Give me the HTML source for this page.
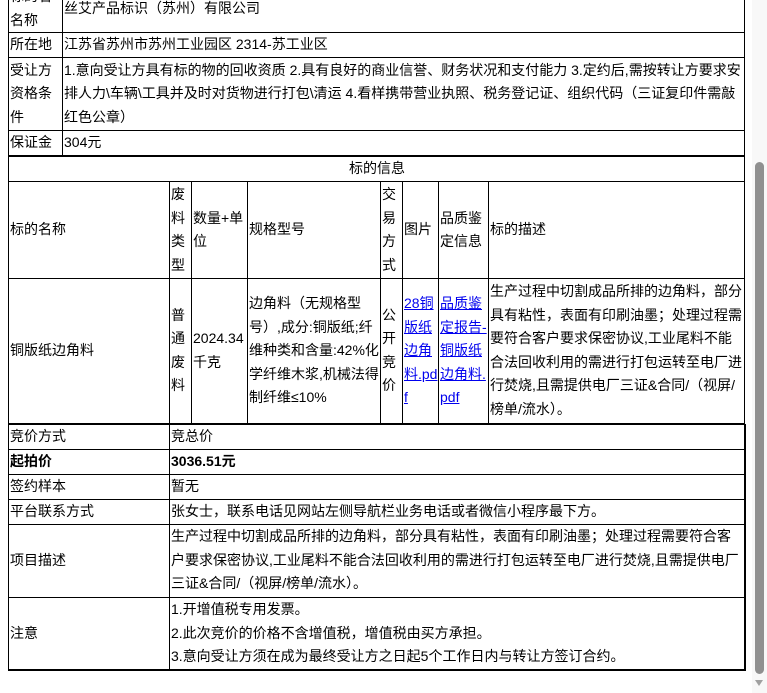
<!DOCTYPE html>
<html><head><meta charset="utf-8"><style>
html,body{margin:0;padding:0;background:#fff;width:767px;height:693px;overflow:hidden;position:relative}
body{font-family:"Liberation Sans","Noto Sans CJK SC",sans-serif;font-size:14px;color:#000}
table{border-collapse:collapse;table-layout:fixed;position:absolute}
td{border:1px solid #000;padding:0 0 0 1px;vertical-align:middle;line-height:23.5px;word-break:break-all}
a{color:#00e;text-decoration:underline}
.sb{position:absolute;left:752px;top:0;width:15px;height:693px;background:#f8f8f8}
.th{position:absolute;left:755px;top:162px;width:9px;height:512px;background:#909090;border-radius:5px}
.ar{position:absolute;left:755px;top:680px;width:0;height:0;border-left:4.5px solid transparent;border-right:4.5px solid transparent;border-top:6px solid #a0a0a0}
</style></head><body>
<table style="left:8px;top:-16px;width:736px">
<colgroup><col style="width:54px"><col style="width:682px"></colgroup>
<tr style="height:48px"><td style="vertical-align:top">标的名<br>名称</td><td>丝艾产品标识（苏州）有限公司</td></tr>
<tr style="height:25px"><td>所在地</td><td>江苏省苏州市苏州工业园区 2314-苏工业区</td></tr>
<tr style="height:73px"><td>受让方资格条件</td><td>1.意向受让方具有标的物的回收资质 2.具有良好的商业信誉、财务状况和支付能力 3.定约后,需按转让方要求安排人力\车辆\工具并及时对货物进行打包\清运 4.看样携带营业执照、税务登记证、组织代码（三证复印件需敲红色公章）</td></tr>
<tr style="height:25px"><td style="border-bottom:2px solid #000">保证金</td><td style="border-bottom:2px solid #000">304元</td></tr>
</table>
<table style="left:8px;top:156px;width:736px">
<colgroup><col style="width:161px"><col style="width:22px"><col style="width:56px"><col style="width:133px"><col style="width:22px"><col style="width:36px"><col style="width:50px"><col style="width:256px"></colgroup>
<tr style="height:25px"><td colspan="8" style="text-align:center">标的信息</td></tr>
<tr style="height:97px"><td>标的名称</td><td>废料类型</td><td>数量+单位</td><td>规格型号</td><td>交易方式</td><td>图片</td><td>品质鉴定信息</td><td>标的描述</td></tr>
<tr style="height:145px"><td style="border-bottom:2px solid #000">铜版纸边角料</td><td style="border-bottom:2px solid #000">普通废料</td><td style="border-bottom:2px solid #000">2024.34千克</td><td style="border-bottom:2px solid #000">边角料（无规格型号）,成分:铜版纸;纤维种类和含量:42%化学纤维木浆,机械法得制纤维≤10%</td><td style="border-bottom:2px solid #000">公开竞价</td><td style="border-bottom:2px solid #000"><a>28铜版纸边角料.pdf</a></td><td style="border-bottom:2px solid #000"><a>品质鉴定报告-铜版纸边角料.pdf</a></td><td style="border-bottom:2px solid #000">生产过程中切割成品所排的边角料，部分具有粘性，表面有印刷油墨；处理过程需要符合客户要求保密协议,工业尾料不能合法回收利用的需进行打包运转至电厂进行焚烧,且需提供电厂三证&amp;合同/（视屏/榜单/流水）。</td></tr>
</table>
<table style="left:8px;top:424px;width:736px;border:1px solid #000;border-right:2px solid #000;border-bottom:2px solid #000">
<colgroup><col style="width:161px"><col style="width:575px"></colgroup>
<tr style="height:24px"><td>竞价方式</td><td>竞总价</td></tr>
<tr style="height:25px"><td><b>起拍价</b></td><td><b>3036.51元</b></td></tr>
<tr style="height:25px"><td>签约样本</td><td>暂无</td></tr>
<tr style="height:25px"><td>平台联系方式</td><td>张女士，联系电话见网站左侧导航栏业务电话或者微信小程序最下方。</td></tr>
<tr style="height:73px"><td>项目描述</td><td>生产过程中切割成品所排的边角料，部分具有粘性，表面有印刷油墨；处理过程需要符合客户要求保密协议,工业尾料不能合法回收利用的需进行打包运转至电厂进行焚烧,且需提供电厂三证&amp;合同/（视屏/榜单/流水）。</td></tr>
<tr style="height:73px"><td>注意</td><td>1.开增值税专用发票。<br>2.此次竞价的价格不含增值税，增值税由买方承担。<br>3.意向受让方须在成为最终受让方之日起5个工作日内与转让方签订合约。</td></tr>
</table>
<div class="sb"></div><div class="th"></div><div class="ar"></div>
</body></html>
